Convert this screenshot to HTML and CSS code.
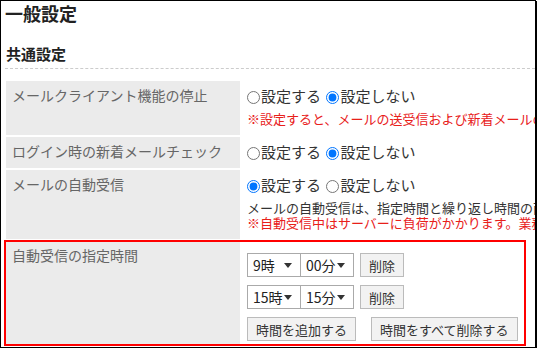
FILE: index.html
```html
<!DOCTYPE html>
<html lang="ja">
<head>
    <meta charset="UTF-8">
    <meta name="viewport" content="width=device-width, initial-scale=1.0">
    <title>一般設定</title>
    <link rel="stylesheet" href="styles.css">
</head>
<body>

    <div class="frame">
        <h1 class="page-title">一般設定</h1>
        <h2 class="section-title">共通設定</h2>

        <!-- 設定項目 -->
        <div class="settings">
            <div class="row">
                <div class="label">メールクライアント機能の停止</div>
                <div class="value">
                    <label class="choice"><input type="radio" name="client">設定する</label>
                    <label class="choice"><input type="radio" name="client" checked>設定しない</label>
                    <p class="note warn">※設定すると、メールの送受信および新着メールの確認ができなくなります。</p>
                </div>
            </div>

            <div class="row">
                <div class="label">ログイン時の新着メールチェック</div>
                <div class="value">
                    <label class="choice"><input type="radio" name="check">設定する</label>
                    <label class="choice"><input type="radio" name="check" checked>設定しない</label>
                </div>
            </div>

            <div class="row">
                <div class="label">メールの自動受信</div>
                <div class="value">
                    <label class="choice"><input type="radio" name="auto" checked>設定する</label>
                    <label class="choice"><input type="radio" name="auto">設定しない</label>
                    <p class="note">メールの自動受信は、指定時間と繰り返し時間の両方を設定できます。<br>
                    <span class="warn">※自動受信中はサーバーに負荷がかかります。業務に支障がない時間を指定してください。</span></p>
                </div>
            </div>

            <div class="row highlight">
                <div class="label">自動受信の指定時間</div>
                <div class="value times">
                    <div class="time-row">
                        <span class="select hour">9時<i class="arrow"></i></span>
                        <span class="select minute">00分<i class="arrow"></i></span>
                        <button class="btn">削除</button>
                    </div>
                    <div class="time-row">
                        <span class="select hour">15時<i class="arrow"></i></span>
                        <span class="select minute">15分<i class="arrow"></i></span>
                        <button class="btn">削除</button>
                    </div>
                    <div class="time-row">
                        <button class="btn">時間を追加する</button>
                        <button class="btn wide-gap">時間をすべて削除する</button>
                    </div>
                </div>
            </div>
        </div>
    </div>

</body>
</html>
```

FILE: styles.css
```css
body { margin: 0; font-family: "Noto Sans CJK JP", "Noto Sans", sans-serif; color: #333; }

/* 外枠 */
.frame { width: 530px; height: 346px; padding-left: 4px; border: 1px solid #000; box-shadow: 1px 1px 0 #000; overflow: hidden; background: #fff; }

.page-title { margin: 0; font-size: 18px; line-height: 24px; font-weight: bold; color: #222; }
.section-title { margin: 19px 0 0; padding: 0 0 4px 1px; font-size: 15px; line-height: 20px; font-weight: bold; color: #222; border-bottom: 1px dashed #ccc; }

/* 設定テーブル */
.settings { margin: 12px 0 0 1px; width: 720px; }
.row { display: grid; grid-template-columns: 234px 1fr; margin-bottom: 2px; position: relative; }
.label { background: #ebebeb; color: #666; font-size: 14px; line-height: 21px; padding: 4px 6px 6px; }
.value { padding: 4px 6px 6px 7px; font-size: 15px; line-height: 21px; white-space: nowrap; }

.choice { margin-right: 2px; }
.choice input { margin: 0 1px 0 0; width: 13px; height: 13px; vertical-align: -2px; }

.note { margin: 5px 0 3px; font-size: 13px; line-height: 15px; color: #333; }
.warn { color: #e8201a; }

/* 指定時間 */
.times { padding-top: 12px; padding-bottom: 3px; }
.time-row { display: flex; align-items: center; height: 24px; margin-bottom: 8px; }
.time-row:last-child { margin-bottom: 0; }

.select { display: inline-flex; align-items: center; justify-content: space-between; box-sizing: border-box; width: 54px; height: 24px; padding: 0 8px 0 5px; border: 1px solid #aaa; background: #fff; font-size: 14px; color: #222; }
.select.minute { margin-left: -1px; }
.arrow { width: 0; height: 0; border-left: 4px solid transparent; border-right: 4px solid transparent; border-top: 5px solid #333; }

.btn { height: 24px; padding: 0 8px; margin-left: 6px; border: 1px solid #bbb; background: #f2f2f2; font-family: inherit; font-size: 13px; color: #333; }
.time-row:last-child .btn:first-child { margin-left: 0; }
.btn.wide-gap { margin-left: 15px; }

/* 注目枠 */
.highlight::after { content: ""; position: absolute; left: -2px; top: -1px; bottom: -2px; width: 522px; border: 2px solid #f00; box-sizing: border-box; pointer-events: none; }
```
